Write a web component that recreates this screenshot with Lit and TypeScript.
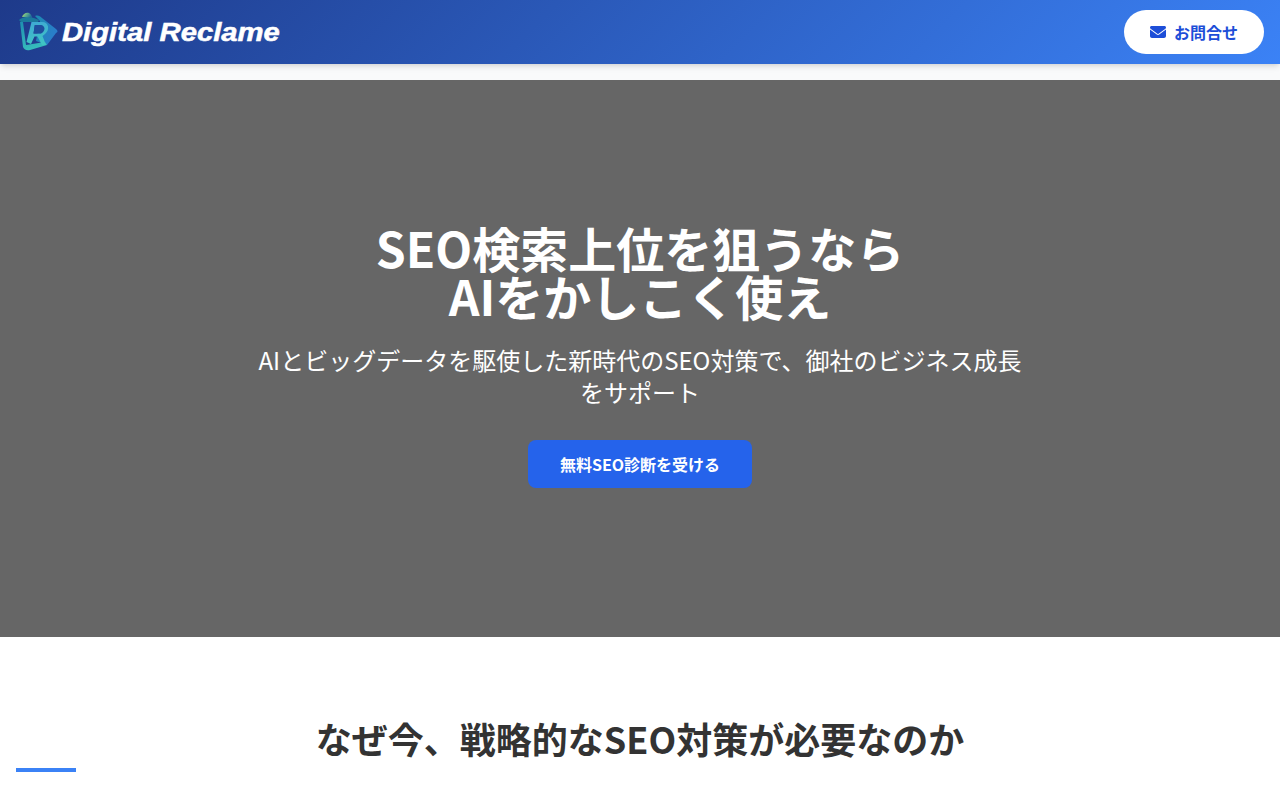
import { LitElement, html, css } from 'lit';
import { customElement } from 'lit/decorators.js';

@customElement('app-root')
export class AppRoot extends LitElement {
  static styles = css`
    :host {
      display: block;
      height: 800px;
      overflow: hidden;
      background: #f9fafb;
      font-family: 'Noto Sans CJK JP', 'Noto Sans', sans-serif;
    }

    .header {
      position: relative;
      z-index: 10;
      height: 64px;
      box-sizing: border-box;
      padding: 0 16px;
      display: flex;
      align-items: center;
      justify-content: space-between;
      background: linear-gradient(135deg, #1e3a8a, #3b82f6);
      box-shadow: 0 4px 6px -1px rgba(0, 0, 0, 0.1), 0 2px 4px -2px rgba(0, 0, 0, 0.1);
    }

    .logo {
      display: flex;
      align-items: center;
      gap: 4px;
    }

    .logo svg {
      display: block;
      width: 42px;
      height: 42px;
    }

    .logo-text {
      display: inline-block;
      font-family: 'Liberation Sans', Arial, sans-serif;
      font-size: 25px;
      font-weight: 700;
      font-style: italic;
      color: #fff;
      line-height: 1;
      white-space: nowrap;
      transform: scaleX(1.17);
      transform-origin: left center;
      -webkit-text-stroke: 0.5px #fff;
    }

    .contact {
      width: 140px;
      height: 44px;
      border-radius: 22px;
      background: #fff;
      color: #1d4ed8;
      display: flex;
      align-items: center;
      justify-content: center;
      gap: 8px;
      font-size: 16px;
      font-weight: 700;
    }

    .contact svg {
      width: 16px;
      height: 16px;
      fill: #1d4ed8;
    }

    .main {
      padding-top: 16px;
    }

    .hero {
      height: 557px;
      box-sizing: border-box;
      padding-top: 143px;
      background: #666;
      color: #fff;
      display: flex;
      flex-direction: column;
      align-items: center;
      text-align: center;
    }

    .hero h1 {
      margin: 0 0 25px;
      font-size: 48px;
      line-height: 48px;
      font-weight: 700;
    }

    .hero p {
      margin: 0 0 32px;
      width: 768px;
      font-size: 24px;
      line-height: 32px;
    }

    .cta {
      width: 224px;
      height: 48px;
      border-radius: 8px;
      background: #2563eb;
      color: #fff;
      display: flex;
      align-items: center;
      justify-content: center;
      font-size: 16px;
      font-weight: 700;
    }

    .why {
      background: #fff;
      padding: 81px 16px 80px;
    }

    .why h2 {
      margin: 0;
      text-align: center;
      font-size: 36px;
      line-height: 40px;
      font-weight: 700;
      color: #333;
    }

    .rule {
      width: 60px;
      height: 4px;
      margin-top: 10px;
      background: #3b82f6;
    }
  `;

  render() {
    return html`
      <header class="header">
        <div class="logo">
          <svg viewBox="0 0 42 42" aria-hidden="true">
            <defs>
              <linearGradient id="top" x1="0" y1="0" x2="1" y2="0.4">
                <stop offset="0" stop-color="#d3dc3c" />
                <stop offset="0.4" stop-color="#6fb98a" />
                <stop offset="1" stop-color="#1f6f9a" />
              </linearGradient>
              <linearGradient id="arrow" x1="0" y1="0" x2="1" y2="0.6">
                <stop offset="0" stop-color="#1c8ab0" />
                <stop offset="1" stop-color="#2b7ccc" />
              </linearGradient>
              <linearGradient id="body" x1="0" y1="0" x2="0.3" y2="1">
                <stop offset="0" stop-color="#1f8fb0" />
                <stop offset="1" stop-color="#36bcbc" />
              </linearGradient>
              <linearGradient id="letter" x1="0" y1="0" x2="0.2" y2="1">
                <stop offset="0" stop-color="#3fa8d4" />
                <stop offset="1" stop-color="#3fc4c4" />
              </linearGradient>
            </defs>
            <path d="M19 5 C22 4 24 5 26 7 L40 18 C42 20 42 21 40 22 L31 34 L20 30 L24 10 Z" fill="url(#arrow)" />
            <path d="M3 9 C5 7 8 6 11 6 C15 6 19 7 23 9 L22 11 L5 11 Z" fill="#1b7a9c" />
            <path d="M6 6 C7 3 10 1 13 2 C15 3 16 5 16 7 C12 6 9 6 6 6 Z" fill="url(#top)" />
            <path d="M4 11 L7 11 L10 34 L29 31 L31 34 L14 39 C10 40 8 38 7 36 Z" fill="url(#body)" />
            <path
              d="M10.500 31 L15.500 11 L26 11 C33 11 34 19 29 23 L26.500 25 L30 34 L26 34 L21.500 25.500 L18.500 25.500 L15 33 Z M18.800 14 L17.500 22.500 L25 22.500 C29.500 20 29.500 15 25 14 Z"
              fill="url(#letter)"
              fill-rule="evenodd"
            />
            <path d="M18.800 14 L17.500 22.500 L25 22.500 C29.500 20 29.500 15 25 14 Z" fill="#1f4f9e" />
          </svg>
          <span class="logo-text">Digital Reclame</span>
        </div>
        <div class="contact">
          <svg viewBox="0 0 512 512" aria-hidden="true">
            <path d="M48 64C21.5 64 0 85.5 0 112c0 15.100 7.100 29.300 19.200 38.400L236.800 313.600c11.400 8.500 27 8.500 38.400 0L492.800 150.400c12.100-9.100 19.200-23.300 19.200-38.400c0-26.500-21.500-48-48-48H48zM0 176V384c0 35.300 28.700 64 64 64H448c35.300 0 64-28.700 64-64V176L294.400 339.200c-22.800 17.100-54 17.100-76.800 0L0 176z" />
          </svg>
          <span>お問合せ</span>
        </div>
      </header>
      <main class="main">
        <section class="hero">
          <h1>SEO検索上位を狙うなら<br />AIをかしこく使え</h1>
          <p>AIとビッグデータを駆使した新時代のSEO対策で、御社のビジネス成長をサポート</p>
          <div class="cta">無料SEO診断を受ける</div>
        </section>
        <section class="why">
          <h2>なぜ今、戦略的なSEO対策が必要なのか</h2>
          <div class="rule"></div>
        </section>
      </main>
    `;
  }
}
